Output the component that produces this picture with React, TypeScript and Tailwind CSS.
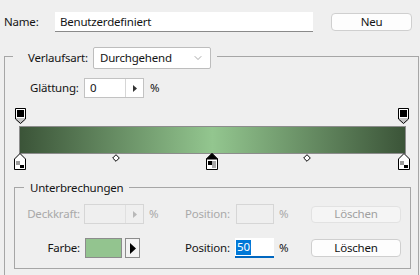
import React from 'react';
import { ChevronDown } from 'lucide-react';

const TopStop: React.FC<{ className: string }> = ({ className }) => (
  <svg className={className} width="11" height="16" viewBox="0 0 11 16">
    <path d="M0.5 0.5 H10.5 V11 L5.5 15.5 L0.5 11 Z" fill="#c4c4c4" stroke="#000" />
    <rect x="1" y="1" width="9" height="9" fill="#fff" />
    <rect x="2" y="2" width="7" height="7" fill="#000" />
  </svg>
);

const ColorStop: React.FC<{ className: string; selected?: boolean }> = ({ className, selected }) => (
  <svg className={className} width="12" height="17" viewBox="0 0 12 17">
    <path d="M6 0.5 L11.5 6 V16.5 H0.5 V6 Z" fill="#fff" stroke="#000" />
    {selected && <path d="M6 0.5 L11.5 6 H0.5 Z" fill="#000" stroke="#000" />}
    <rect x="2" y="8" width="4" height="4" fill={selected ? '#000' : '#9c9c9c'} />
    <rect x="6" y="8" width="4" height="4" fill={selected ? '#a8a8a8' : '#fff'} />
    <rect x="2" y="12" width="4" height="3" fill="#fff" />
    <rect x="6" y="12" width="4" height="3" fill={selected ? '#a8a8a8' : '#000'} />
  </svg>
);

const Midpoint: React.FC<{ className: string }> = ({ className }) => (
  <svg className={className} width="8" height="8" viewBox="0 0 8 8">
    <polygon points="4,0.7 7.3,4 4,7.3 0.7,4" fill="#fff" stroke="#000" />
  </svg>
);

const StepArrow: React.FC<{ color: string }> = ({ color }) => (
  <svg width="4" height="7" viewBox="0 0 4 7">
    <polygon points="0,0 4,3.5 0,7" fill={color} />
  </svg>
);

export default function App() {
  return (
    <div
      className="w-[420px] h-[275px] overflow-hidden bg-[#efefef] text-[11.5px] tracking-[-0.2px] leading-none text-[#141414]"
      style={{ fontFamily: '"Noto Sans", "Liberation Sans", sans-serif' }}
    >
      {/* Name row */}
      <div className="flex items-center pt-[12px]">
        <span className="w-[55px] pl-[4px]">Name:</span>
        <div className="w-[258px] h-[20px] bg-white border-b border-[#8a8a8a] flex items-center pl-[5px]">
          Benutzerdefiniert
        </div>
        <button className="ml-[18px] w-[81px] h-[18px] bg-[#fdfdfd] border border-[#cfcfcf] rounded-[4px] flex items-center justify-center">
          Neu
        </button>
      </div>

      {/* Verlauf group */}
      <div className="ml-[4px] mt-[24px] w-[415px] h-[230px] border border-[#a6a6a6]">
        <div className="-mt-[10px] ml-[8px] w-[204px] pl-[15px] pr-[6px] bg-[#efefef] flex items-center">
          <span className="w-[65px]">Verlaufsart:</span>
          <div className="w-[118px] h-[22px] bg-white border border-[#bdbdbd] rounded-[2px] flex items-center pl-[6px] pr-[6px]">
            <span className="flex-1">Durchgehend</span>
            <ChevronDown size={12} strokeWidth={1} className="text-[#555]" />
          </div>
        </div>

        <div className="flex items-center mt-[9px] pl-[25px]">
          <span className="w-[54px]">Glättung:</span>
          <div className="w-[60px] h-[20px] bg-white border border-[#c2c2c2] flex">
            <span className="w-[40px] flex items-center pl-[5px]">0</span>
            <span className="flex-1 border-l border-[#d6d6d6] flex items-center justify-center">
              <StepArrow color="#333" />
            </span>
          </div>
          <span className="ml-[6px]">%</span>
        </div>

        {/* Gradient slider */}
        <div className="relative mt-[7px] h-[68px]">
          <div className="pt-[21px] pl-[14px]">
            <div className="w-[387px] h-[28px] border border-[#8c8c8c] bg-[linear-gradient(to_right,#3b5438_0%,#93c68f_50%,#3b5438_100%)]" />
          </div>
          <TopStop className="absolute left-[10px] top-[3px]" />
          <TopStop className="absolute left-[393px] top-[3px]" />
          <ColorStop className="absolute left-[9px] top-[48px]" />
          <ColorStop className="absolute left-[201px] top-[48px]" selected />
          <ColorStop className="absolute left-[393px] top-[48px]" />
          <Midpoint className="absolute left-[107px] top-[49px]" />
          <Midpoint className="absolute left-[298px] top-[49px]" />
        </div>

        {/* Unterbrechungen group */}
        <div className="ml-[9px] mt-[14px] w-[397px] h-[82px] border border-[#a6a6a6]">
          <div className="-mt-[9px] ml-[9px] w-fit px-[6px] h-[18px] bg-[#efefef] flex items-center">
            Unterbrechungen
          </div>

          <div className="flex items-center mt-[7px] h-[20px] text-[#a9a9a9]">
            <span className="w-[65px] text-right">Deckkraft:</span>
            <div className="ml-[4px] w-[60px] h-[20px] border border-[#d6d6d6] flex">
              <span className="w-[40px]" />
              <span className="flex-1 border-l border-[#e0e0e0] flex items-center justify-center">
                <StepArrow color="#b8b8b8" />
              </span>
            </div>
            <span className="ml-[5px] w-[36px]">%</span>
            <span className="w-[51px]">Position:</span>
            <div className="w-[38px] h-[20px] border border-[#d6d6d6]" />
            <span className="ml-[5px] w-[32px]">%</span>
            <button className="w-[90px] h-[17px] bg-[#f5f5f5] border border-[#e2e2e2] rounded-[4px] flex items-center justify-center text-[#a0a0a0]">
              Löschen
            </button>
          </div>

          <div className="flex items-center mt-[14px] h-[20px]">
            <span className="w-[65px] text-right">Farbe:</span>
            <div className="ml-[5px] w-[37px] h-[20px] bg-[#93c48f] border border-[#8c8c8c]" />
            <div className="ml-[3px] w-[15px] h-[20px] bg-[#f3f3f3] border border-[#8c8c8c] flex items-center justify-center">
              <svg width="6" height="11" viewBox="0 0 6 11">
                <polygon points="0,0 6,5.5 0,11" fill="#000" />
              </svg>
            </div>
            <span className="ml-[10px] w-[35px]" />
            <span className="w-[50px]">Position:</span>
            <div className="w-[39px] h-[20px] bg-white border-b-2 border-[#0067c0] flex items-center pl-[1px]">
              <span className="bg-[#0078d7] text-white h-[15px] px-[1px] flex items-center">50</span>
            </div>
            <span className="ml-[5px] w-[32px]">%</span>
            <button className="w-[90px] h-[18px] bg-[#fdfdfd] border border-[#cfcfcf] rounded-[4px] flex items-center justify-center">
              Löschen
            </button>
          </div>
        </div>
      </div>
    </div>
  );
}
